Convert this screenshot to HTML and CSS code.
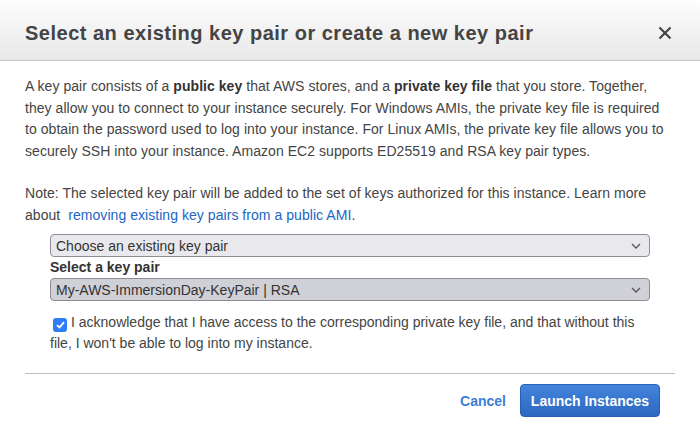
FILE: index.html
```html
<!DOCTYPE html>
<html>
<head>
<meta charset="utf-8">
<link rel="stylesheet" href="styles.css">
</head>
<body>
<div class="modal">
  <div class="header">
    <h1 class="title">Select an existing key pair or create a new key pair</h1>
    <span class="close">
      <svg width="14" height="14" viewBox="0 0 14 14"><path d="M1.5 1.5 L12.5 12.5 M12.5 1.5 L1.5 12.5" stroke="#444" stroke-width="2.2" fill="none"/></svg>
    </span>
  </div>
  <div class="body">
    <p class="para">A key pair consists of a <b>public key</b> that AWS stores, and a <b>private key file</b> that you store. Together, they allow you to connect to your instance securely. For Windows AMIs, the private key file is required to obtain the password used to log into your instance. For Linux AMIs, the private key file allows you to securely SSH into your instance. Amazon EC2 supports ED25519 and RSA key pair types.</p>
    <p class="para note">Note: The selected key pair will be added to the set of keys authorized for this instance. Learn more about <a class="link" href="#">removing existing key pairs from a public AMI</a>.</p>
    <div class="form">
      <div class="select light"><span>Choose an existing key pair</span><svg width="10" height="6" viewBox="0 0 10 6"><path d="M1 1 L5 5 L9 1" stroke="#555" stroke-width="1.3" fill="none"/></svg></div>
      <div class="label">Select a key pair</div>
      <div class="select dark"><span>My-AWS-ImmersionDay-KeyPair | RSA</span><svg width="10" height="6" viewBox="0 0 10 6"><path d="M1 1 L5 5 L9 1" stroke="#555" stroke-width="1.3" fill="none"/></svg></div>
      <p class="ack"><span class="check"><svg width="9" height="8" viewBox="0 0 9 8"><path d="M1 4.2 L3.5 6.5 L8 1.2" stroke="#fff" stroke-width="1.8" fill="none"/></svg></span>I acknowledge that I have access to the corresponding private key file, and that without this file, I won't be able to log into my instance.</p>
    </div>
  </div>
  <div class="footer">
    <a class="cancel" href="#">Cancel</a>
    <button class="launch">Launch Instances</button>
  </div>
</div>
</body>
</html>
```
FILE: styles.css
```css
html, body {
  margin: 0;
  padding: 0;
  background: #fff;
}
body {
  font-family: "Liberation Sans", Arial, sans-serif;
  color: #444;
}
.modal {
  width: 700px;
  height: 437px;
  background: #fff;
}
.header {
  height: 61px;
  box-sizing: border-box;
  border-bottom: 1px solid #c8c8c8;
  background: linear-gradient(#fdfdfd, #e8e8e8);
  display: flex;
  align-items: center;
  justify-content: space-between;
  padding: 0 28px 0 25px;
  border-radius: 6px 6px 0 0;
}
.title {
  margin: 0;
  font-size: 20px;
  font-weight: bold;
  color: #444;
  padding-top: 6px;
  letter-spacing: 0.5px;
}
.close {
  display: flex;
  padding-top: 6px;
}
.body {
  padding: 15px 30px 0 25px;
}
.para {
  margin: 0 0 20px 0;
  font-size: 14px;
  line-height: 21.7px;
  letter-spacing: 0.05px;
}
.para.note {
  margin-bottom: 0;
}
.para b {
  color: #333;
}
.link {
  color: #2066c5;
  text-decoration: none;
  margin-left: 4px;
}
.form {
  padding: 0 20px 0 25px;
  margin-top: 8px;
}
.select {
  height: 23px;
  box-sizing: border-box;
  border: 1px solid #8d8d96;
  border-radius: 4px;
  display: flex;
  align-items: center;
  justify-content: space-between;
  padding: 0 8px 0 5px;
  font-size: 14px;
  color: #333;
}
.select.light {
  background: #e9e9ed;
}
.select.dark {
  background: #d0d0d7;
}
.label {
  font-size: 14px;
  font-weight: bold;
  color: #333;
  line-height: 21px;
}
.ack {
  margin: 11px 0 0 0;
  font-size: 14px;
  line-height: 21px;
}
.check {
  display: inline-flex;
  align-items: center;
  justify-content: center;
  width: 14px;
  height: 14px;
  background: #2e7ef7;
  border-radius: 3px;
  vertical-align: -2px;
  margin: 0 4px 0 3px;
}
.footer {
  margin: 19px 25px 0 25px;
  border-top: 1px solid #bcbcbc;
  display: flex;
  justify-content: flex-end;
  align-items: center;
  gap: 14px;
  padding-top: 10px;
}
.cancel {
  color: #3b7ed7;
  font-weight: bold;
  font-size: 14px;
  text-decoration: none;
  margin-top: 1px;
}
.launch {
  width: 140px;
  height: 33px;
  border: 1px solid #2a62b3;
  border-radius: 4px;
  background: linear-gradient(#4384dc, #2c68c1);
  color: #fff;
  font-family: "Liberation Sans", Arial, sans-serif;
  font-weight: bold;
  font-size: 14px;
  margin-right: 15px;
  padding: 0;
}
```
